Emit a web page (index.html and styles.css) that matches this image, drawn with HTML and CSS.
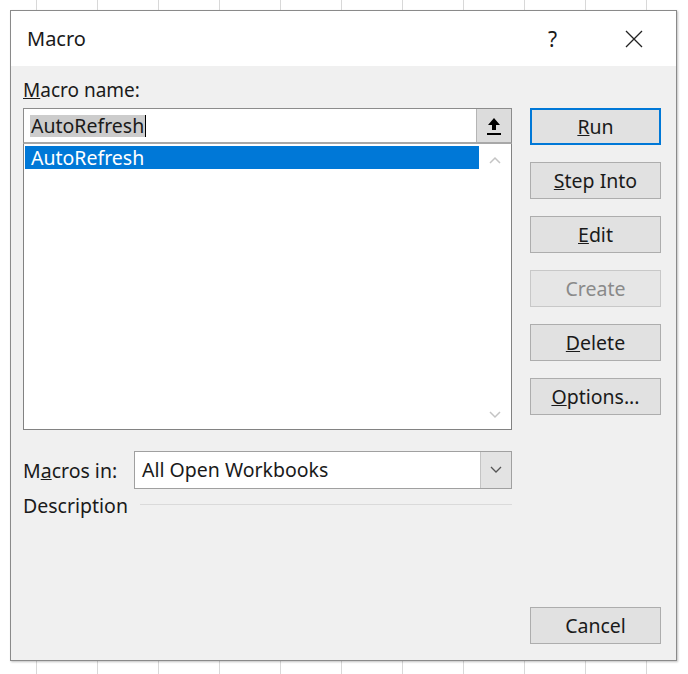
FILE: index.html
```html
<!DOCTYPE html>
<html lang="en">
<head>
    <meta charset="UTF-8">
    <title>Macro</title>
    <link rel="stylesheet" href="styles.css">
</head>
<body>
    <div class="sheet">
        <div class="dialog">
            <div class="titlebar">
                <span class="title">Macro</span>
                <span class="help">?</span>
                <svg class="close" width="18" height="18" viewBox="0 0 18 18">
                    <path d="M1 1 L17 17 M17 1 L1 17" stroke="#222" stroke-width="1.3" fill="none"/>
                </svg>
            </div>

            <div class="body">
                <div class="main">
                    <div class="label"><u>M</u>acro name:</div>
                    <div class="name-box">
                        <div class="name-input"><span class="sel">AutoRefresh</span><span class="caret"></span></div>
                        <div class="name-btn">
                            <svg width="16" height="20" viewBox="0 0 16 20">
                                <path d="M8 2 L14 9 L10 9 L10 14 L6 14 L6 9 L2 9 Z" fill="#000"/>
                                <rect x="1" y="17" width="14" height="2" fill="#000"/>
                            </svg>
                        </div>
                    </div>
                    <div class="list">
                        <div class="items">
                            <div class="item active">AutoRefresh</div>
                        </div>
                        <div class="scroll">
                            <svg width="12" height="8" viewBox="0 0 12 8"><path d="M1 7 L6 2 L11 7" stroke="#c4c4c4" stroke-width="1.5" fill="none"/></svg>
                            <svg width="12" height="8" viewBox="0 0 12 8"><path d="M1 1 L6 6 L11 1" stroke="#c4c4c4" stroke-width="1.5" fill="none"/></svg>
                        </div>
                    </div>

                    <div class="row">
                        <span class="row-label">M<u>a</u>cros in:</span>
                        <div class="select">
                            <span class="select-text">All Open Workbooks</span>
                            <div class="select-btn">
                                <svg width="12" height="8" viewBox="0 0 12 8"><path d="M1 1 L6 6 L11 1" stroke="#555" stroke-width="1.3" fill="none"/></svg>
                            </div>
                        </div>
                    </div>

                    <div class="desc">
                        <span>Description</span>
                        <div class="desc-line"></div>
                    </div>
                </div>

                <div class="actions">
                    <button class="btn default"><u>R</u>un</button>
                    <button class="btn"><u>S</u>tep Into</button>
                    <button class="btn"><u>E</u>dit</button>
                    <button class="btn disabled">Create</button>
                    <button class="btn"><u>D</u>elete</button>
                    <button class="btn"><u>O</u>ptions...</button>
                    <button class="btn cancel">Cancel</button>
                </div>
            </div>
        </div>
    </div>
</body>
</html>
```

FILE: styles.css
```css
* {
    margin: 0;
    padding: 0;
    box-sizing: border-box;
}

body {
    background: #fff;
    font-family: "Noto Sans", "Open Sans", sans-serif;
    color: #1a1a1a;
}

/* Spreadsheet behind the dialog */
.sheet {
    width: 688px;
    height: 674px;
    padding: 10px 0 0 10px;
    background-image: repeating-linear-gradient(90deg, transparent 0, transparent 39px, #d8d8d8 39px, #d8d8d8 40px);
    background-size: 61px 100%;
    background-position: 119px 0;
}

/* Dialog */
.dialog {
    width: 667px;
    height: 651px;
    border: 1px solid #8a8a8a;
    background: #f0f0f0;
    display: flex;
    flex-direction: column;
    box-shadow: 1px 1px 2px rgba(0, 0, 0, 0.25);
}

.titlebar {
    height: 55px;
    background: #fff;
    display: flex;
    align-items: center;
    padding: 0 33px 0 16px;
}

.title {
    font-size: 20px;
    flex: 1;
}

.help {
    font-size: 21px;
    margin-right: 68px;
}

.body {
    flex: 1;
    display: flex;
    padding: 12px 14px 16px 12px;
    gap: 18px;
}

.main {
    width: 489px;
    display: flex;
    flex-direction: column;
}

.label {
    font-size: 19px;
    line-height: 24px;
    margin-bottom: 6px;
}

/* Macro name box */
.name-box {
    height: 36px;
    display: flex;
    border: 1px solid #8c8c8c;
    border-bottom: 2px solid #a8a8a8;
    background: #fff;
}

.name-input {
    flex: 1;
    display: flex;
    align-items: center;
    padding-left: 6px;
    font-size: 19.5px;
}

.sel {
    background: #cccccc;
    line-height: 22px;
    padding: 0 1px;
}

.caret {
    width: 1px;
    height: 22px;
    background: #000;
}

.name-btn {
    width: 35px;
    background: #dcdcdc;
    border-left: 1px solid #b5b5b5;
    display: flex;
    align-items: center;
    justify-content: center;
}

/* Macro list */
.list {
    height: 286px;
    border: 1px solid #828282;
    border-top: none;
    background: #fff;
    display: flex;
}

.items {
    flex: 1;
    padding: 2px 0 0 1px;
}

.item {
    font-size: 19.5px;
    line-height: 23px;
    padding-left: 6px;
}

.item.active {
    background: #0078d7;
    color: #fff;
}

.scroll {
    width: 32px;
    display: flex;
    flex-direction: column;
    justify-content: space-between;
    align-items: center;
    padding: 12px 0 10px;
}

/* Macros in */
.row {
    display: flex;
    align-items: center;
    margin-top: 21px;
}

.row-label {
    font-size: 19.5px;
    width: 111px;
}

.select {
    flex: 1;
    height: 38px;
    display: flex;
    border: 1px solid #a0a0a0;
    background: #fff;
}

.select-text {
    flex: 1;
    font-size: 19.5px;
    line-height: 36px;
    padding-left: 7px;
}

.select-btn {
    width: 31px;
    background: #e3e3e3;
    border-left: 1px solid #c4c4c4;
    display: flex;
    align-items: center;
    justify-content: center;
}

.desc {
    display: flex;
    align-items: center;
    gap: 12px;
    margin-top: 3px;
    font-size: 19.5px;
}

.desc-line {
    flex: 1;
    height: 1px;
    background: #dadada;
    margin-top: -2px;
}

/* Command buttons */
.actions {
    width: 131px;
    display: flex;
    flex-direction: column;
    gap: 17px;
    padding-top: 30px;
}

.btn {
    height: 37px;
    background: #e1e1e1;
    border: 1px solid #adadad;
    font-family: inherit;
    font-size: 19.5px;
    color: #1a1a1a;
}

.btn.default {
    border: 2px solid #0078d7;
}

.btn.disabled {
    color: #8a8a8a;
    background: #e6e6e6;
    border-color: #c8c8c8;
}

.btn.cancel {
    margin-top: auto;
}
```
